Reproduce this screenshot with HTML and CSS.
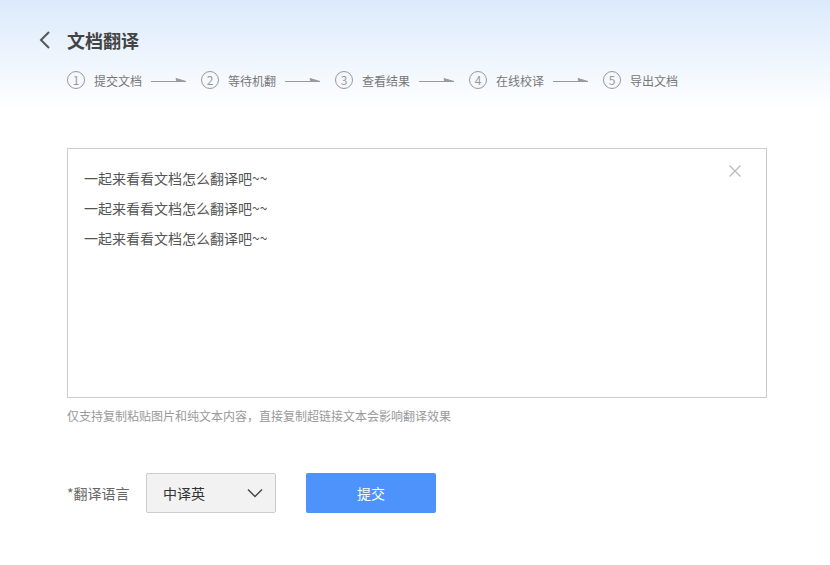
FILE: index.html
```html
<!DOCTYPE html>
<html>
<head>
  <title>文档翻译</title>
  <link rel="stylesheet" href="styles.css">
</head>
<body>
  <header class="top">
    <div class="title-row">
      <a href="#" class="back">
        <svg width="14" height="18" viewBox="0 0 14 18"><path d="M11 1 L3 9 L11 17" fill="none" stroke="#555" stroke-width="2"/></svg>
      </a>
      <h1 class="title">文档翻译</h1>
    </div>
    <div class="steps">
      <div class="step"><span class="num">1</span><span class="label">提交文档</span></div>
      <svg class="arrow" width="35" height="6" viewBox="0 0 35 6"><path d="M0 4.5 H35 L25 1.5 L26 4.5" fill="#999" stroke="#999" stroke-width="1"/></svg>
      <div class="step"><span class="num">2</span><span class="label">等待机翻</span></div>
      <svg class="arrow" width="35" height="6" viewBox="0 0 35 6"><path d="M0 4.5 H35 L25 1.5 L26 4.5" fill="#999" stroke="#999" stroke-width="1"/></svg>
      <div class="step"><span class="num">3</span><span class="label">查看结果</span></div>
      <svg class="arrow" width="35" height="6" viewBox="0 0 35 6"><path d="M0 4.5 H35 L25 1.5 L26 4.5" fill="#999" stroke="#999" stroke-width="1"/></svg>
      <div class="step"><span class="num">4</span><span class="label">在线校译</span></div>
      <svg class="arrow" width="35" height="6" viewBox="0 0 35 6"><path d="M0 4.5 H35 L25 1.5 L26 4.5" fill="#999" stroke="#999" stroke-width="1"/></svg>
      <div class="step"><span class="num">5</span><span class="label">导出文档</span></div>
    </div>
  </header>

  <div class="main">
    <div class="editor">
      <a href="#" class="clear">
        <svg width="12" height="12" viewBox="0 0 12 12"><path d="M0.5 0.5 L11.5 11.5 M11.5 0.5 L0.5 11.5" stroke="#bbb" stroke-width="1.3"/></svg>
      </a>
      <p>一起来看看文档怎么翻译吧~~</p>
      <p>一起来看看文档怎么翻译吧~~</p>
      <p>一起来看看文档怎么翻译吧~~</p>
    </div>
    <div class="hint">仅支持复制粘贴图片和纯文本内容，直接复制超链接文本会影响翻译效果</div>

    <div class="form-row">
      <span class="form-label">*翻译语言</span>
      <div class="select">
        <span>中译英</span>
        <svg width="16" height="10" viewBox="0 0 16 10"><path d="M1 1.5 L8 8.5 L15 1.5" fill="none" stroke="#444" stroke-width="1.4"/></svg>
      </div>
      <button class="button">提交</button>
    </div>
  </div>
</body>
</html>
```

FILE: styles.css
```css
body {
  font-family: "Microsoft YaHei", "Noto Sans CJK SC", sans-serif;
  margin: 0;
  padding: 0;
  background-color: #fff;
  color: #333;
}

.top {
  height: 110px;
  padding: 28px 0 0 38px;
  box-sizing: border-box;
  background: linear-gradient(to bottom, #dbeafb, #ffffff);
}

.title-row {
  display: flex;
  align-items: center;
}

.back {
  display: flex;
  width: 29px;
}

.title {
  margin: 0;
  font-size: 18px;
  font-weight: bold;
  color: #444;
  line-height: 24px;
}

.steps {
  display: flex;
  align-items: center;
  margin: 19px 0 0 29px;
}

.step {
  display: flex;
  align-items: center;
}

.num {
  width: 16px;
  height: 16px;
  border: 1px solid #999;
  border-radius: 50%;
  font-size: 12px;
  line-height: 16px;
  text-align: center;
  color: #999;
}

.label {
  margin-left: 9px;
  font-size: 12px;
  color: #777;
  width: 48px;
}

.arrow {
  margin: 0 15px 0 9px;
}

.main {
  padding: 38px 0 0 67px;
}

.editor {
  position: relative;
  width: 700px;
  height: 250px;
  box-sizing: border-box;
  border: 1px solid #ccc;
  padding: 14px 16px;
}

.editor p {
  margin: 0;
  font-size: 14px;
  line-height: 30px;
  color: #555;
}

.clear {
  position: absolute;
  top: 16px;
  right: 25px;
  display: flex;
}

.hint {
  margin-top: 9px;
  font-size: 12px;
  color: #999;
  line-height: 18px;
}

.form-row {
  display: flex;
  align-items: center;
  margin-top: 48px;
}

.form-label {
  font-size: 14px;
  color: #666;
  width: 79px;
}

.select {
  width: 130px;
  height: 40px;
  box-sizing: border-box;
  border: 1px solid #ccc;
  border-radius: 2px;
  background-color: #f2f2f2;
  display: flex;
  align-items: center;
  justify-content: space-between;
  padding: 0 12px 0 16px;
  font-size: 14px;
  color: #333;
}

.button {
  margin-left: 30px;
  width: 130px;
  height: 40px;
  background-color: #4e92fb;
  color: #fff;
  font-family: inherit;
  font-size: 14px;
  border: none;
  border-radius: 2px;
  cursor: pointer;
}
```
